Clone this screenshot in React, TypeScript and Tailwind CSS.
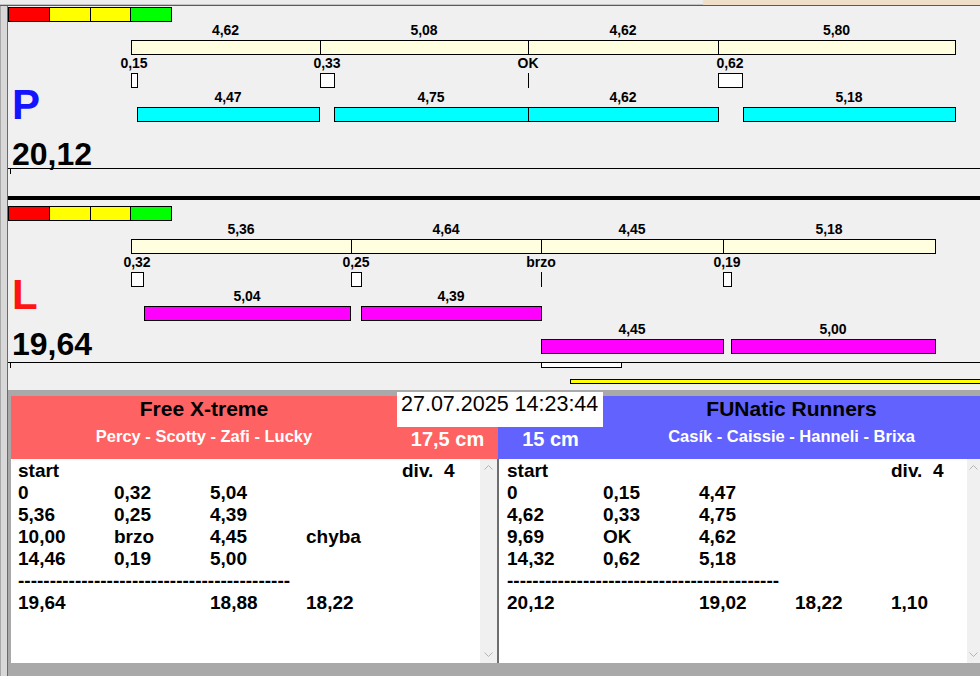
import React from 'react'

type Seg = [number, number, string]
type Row = { top: number; color: string; segs: Seg[] }

// chart coordinates are page pixels; the lane canvas starts at x = 8
const X0 = 8

const P_ROWS: Row[] = [
  { top: 40, color: 'bg-[#ffffe0]', segs: [[131, 320, '4,62'], [320, 528, '5,08'], [528, 718, '4,62'], [718, 955, '5,80']] },
  { top: 73, color: 'bg-white', segs: [[131, 137, '0,15'], [320, 334, '0,33'], [528, 528, 'OK'], [718, 742, '0,62']] },
  { top: 107, color: 'bg-[#00ffff]', segs: [[137, 319, '4,47'], [334, 528, '4,75'], [528, 718, '4,62'], [743, 955, '5,18']] },
]

const L_ROWS: Row[] = [
  { top: 239, color: 'bg-[#ffffe0]', segs: [[131, 351, '5,36'], [351, 541, '4,64'], [541, 723, '4,45'], [723, 935, '5,18']] },
  { top: 272, color: 'bg-white', segs: [[131, 143, '0,32'], [351, 361, '0,25'], [541, 541, 'brzo'], [723, 731, '0,19']] },
  { top: 306, color: 'bg-[#ff00ff]', segs: [[144, 350, '5,04'], [361, 541, '4,39']] },
  { top: 339, color: 'bg-[#ff00ff]', segs: [[541, 723, '4,45'], [731, 935, '5,00']] },
]

const LEFT_ROWS = [
  ['0', '0,32', '5,04', '', ''],
  ['5,36', '0,25', '4,39', '', ''],
  ['10,00', 'brzo', '4,45', 'chyba', ''],
  ['14,46', '0,19', '5,00', '', ''],
]
const LEFT_TOTAL = ['19,64', '', '18,88', '18,22', '']

const RIGHT_ROWS = [
  ['0', '0,15', '4,47', '', ''],
  ['4,62', '0,33', '4,75', '', ''],
  ['9,69', 'OK', '4,62', '', ''],
  ['14,32', '0,62', '5,18', '', ''],
]
const RIGHT_TOTAL = ['20,12', '', '19,02', '18,22', '1,10']

function ColorBar({ className }: { className: string }) {
  return (
    <div className={`flex h-[15px] w-[164px] border border-black ${className}`}>
      <div className="flex-1 bg-[#ff0000]" />
      <div className="flex-1 border-l border-black bg-[#ffff00]" />
      <div className="flex-1 border-l border-black bg-[#ffff00]" />
      <div className="flex-1 border-l border-black bg-[#00ff00]" />
    </div>
  )
}

function Bars({ rows, panelTop }: { rows: Row[]; panelTop: number }) {
  return (
    <>
      {rows.map((row, r) =>
        row.segs.map(([x1, x2, label], i) => (
          <React.Fragment key={`${r}-${i}`}>
            <div
              className="absolute w-[100px] text-center text-[14px] font-bold leading-none text-black"
              style={{ left: (x1 + x2) / 2 - 50 - X0, top: row.top - 17 - panelTop }}
            >
              {label}
            </div>
            {x2 > x1 ? (
              <div
                className={`absolute h-[15px] border border-black ${row.color}`}
                style={{ left: x1 - X0, top: row.top - panelTop, width: x2 - x1 + 1 }}
              />
            ) : (
              <div className="absolute h-[15px] w-px bg-black" style={{ left: x1 - X0, top: row.top - panelTop }} />
            )}
          </React.Fragment>
        ))
      )}
    </>
  )
}

interface LaneProps {
  panelTop: number
  rows: Row[]
  letter: string
  letterColor: string
  total: string
  barMt: string
  letterMt: string
  lineMt: string
  children?: React.ReactNode
}

function Lane({ panelTop, rows, letter, letterColor, total, barMt, letterMt, lineMt, children }: LaneProps) {
  return (
    <div className="relative flex h-[190px] flex-col">
      <ColorBar className={barMt} />
      <div className={`${letterMt} pl-[4px] text-[42px] font-bold leading-none ${letterColor}`}>{letter}</div>
      <div className="mt-[15px] pl-[4px] text-[32px] font-bold leading-[27px] text-black">{total}</div>
      <div className={`${lineMt} h-px w-full bg-black`} />
      <div className="absolute left-[2px] top-[162px] h-[6px] w-px bg-black" />
      <Bars rows={rows} panelTop={panelTop} />
      {children}
    </div>
  )
}

function Chevron({ up }: { up?: boolean }) {
  return (
    <div className="flex h-[17px] items-center justify-center">
      <svg width="9" height="5" viewBox="0 0 9 5">
        <polyline
          points={up ? '0.5,4.5 4.5,0.5 8.5,4.5' : '0.5,0.5 4.5,4.5 8.5,0.5'}
          fill="none"
          stroke="#b4b4b4"
          strokeWidth="1"
        />
      </svg>
    </div>
  )
}

function Scrollbar({ w }: { w: string }) {
  return (
    <div className={`flex ${w} flex-col justify-between bg-[#f0f0f0]`}>
      <Chevron up />
      <Chevron />
    </div>
  )
}

function ResultList({ rows, total, pad }: { rows: string[][]; total: string[]; pad: string }) {
  return (
    <div className={`flex-1 pt-[1px] ${pad}`}>
      <div className="grid grid-cols-[96px_96px_96px_96px_auto] text-[19px] font-bold leading-[22px] text-black">
        <div>start</div>
        <div />
        <div />
        <div />
        <div className="whitespace-pre">div.  4</div>
        {rows.map((row, r) =>
          row.map((cell, c) => <div key={`${r}-${c}`}>{cell}</div>)
        )}
        <div className="col-span-5 whitespace-nowrap">{'-'.repeat(43)}</div>
        {total.map((cell, c) => (
          <div key={`t-${c}`}>{cell}</div>
        ))}
      </div>
    </div>
  )
}

export default function App() {
  return (
    <div className="flex h-[676px] w-[980px] flex-col overflow-hidden bg-[#f0f0f0] font-['Liberation_Sans',Arial,sans-serif]">
      {/* window top edge */}
      <div className="flex h-[5px]">
        <div className="w-[703px] border-b border-[#c4c4c4] bg-[#ececec]" />
        <div className="flex-1 bg-[#efdfc8]" />
      </div>
      <div className="h-px bg-[#5a5a5a]" />

      <div className="flex flex-1">
        <div className="w-[8px] border-x border-l-[#a8a8a8] border-r-[#6a6a6a] bg-[#d8d8d8]" />

        <div className="flex flex-1 flex-col">
          <Lane
            panelTop={6}
            rows={P_ROWS}
            letter="P"
            letterColor="text-[#1414ff]"
            total="20,12"
            barMt="mt-[1px]"
            letterMt="mt-[62px]"
            lineMt="mt-0"
          />
          <div className="h-[4px] bg-black" />
          <Lane
            panelTop={200}
            rows={L_ROWS}
            letter="L"
            letterColor="text-[#ff1414]"
            total="19,64"
            barMt="mt-[6px]"
            letterMt="mt-[53px]"
            lineMt="mt-[4px]"
          >
            <div className="absolute left-[533px] top-[162px] h-[6px] w-[81px] border border-black bg-white" />
            <div className="absolute left-[562px] top-[179px] h-[5px] w-[420px] border border-black bg-[#ffff00]" />
          </Lane>

          {/* results */}
          <div className="relative flex flex-1 flex-col bg-[#a9a9a9] pl-[3px]">
            <div className="h-[6px]" />
            <div className="flex h-[63px]">
              <div className="flex w-[487px] bg-[#ff6262]">
                <div className="flex w-[386px] flex-col items-center pt-[2px]">
                  <div className="text-[21px] font-bold leading-none text-black">Free X-treme</div>
                  <div className="mt-[9px] text-[16.5px] font-bold leading-none text-white">Percy - Scotty - Zafi - Lucky</div>
                </div>
                <div className="flex-1 pt-[33px] text-center text-[20px] font-bold leading-none text-white">17,5 cm</div>
              </div>
              <div className="flex flex-1 bg-[#6262ff]">
                <div className="w-[105px] pt-[33px] text-center text-[20px] font-bold leading-none text-white">15 cm</div>
                <div className="flex flex-1 flex-col items-center pt-[2px]">
                  <div className="text-[21px] font-bold leading-none text-black">FUNatic Runners</div>
                  <div className="mt-[9px] text-[16.5px] font-bold leading-none text-white">Casík - Caissie - Hanneli - Brixa</div>
                </div>
              </div>
            </div>

            <div className="flex h-[204px]">
              <div className="flex w-[486px] bg-white">
                <ResultList rows={LEFT_ROWS} total={LEFT_TOTAL} pad="pl-[7px]" />
                <Scrollbar w="w-[17px]" />
              </div>
              <div className="w-[2px] bg-[#6e6e6e]" />
              <div className="flex flex-1 bg-white">
                <ResultList rows={RIGHT_ROWS} total={RIGHT_TOTAL} pad="pl-[8px]" />
                <Scrollbar w="w-[13px]" />
              </div>
            </div>

            <div className="flex-1" />

            <div className="absolute left-[389px] top-[2px] h-[35px] w-[206px] bg-white pl-[4px] pt-[2px] text-[21.5px] leading-none text-black">
              27.07.2025 14:23:44
            </div>
          </div>
        </div>
      </div>
    </div>
  )
}
